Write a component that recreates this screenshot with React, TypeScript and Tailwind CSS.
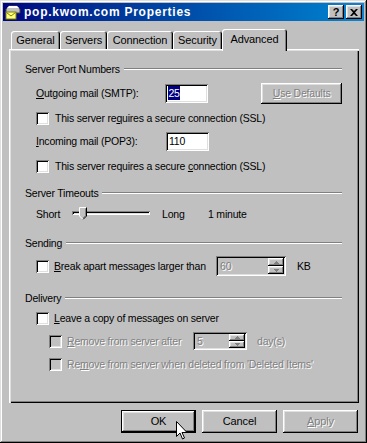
import React from 'react';

const RAISED = 'shadow-[inset_-1px_-1px_#000,inset_1px_1px_#fff,inset_-2px_-2px_#808080,inset_2px_2px_#dfdfdf]';
const SUNKEN = 'shadow-[inset_1px_1px_#808080,inset_-1px_-1px_#fff,inset_2px_2px_#000,inset_-2px_-2px_#dfdfdf]';
const DISABLED = 'text-[#808080] [text-shadow:1px_1px_0_#fff]';

const TABS = [
  { label: 'General', w: 'w-[49px]' },
  { label: 'Servers', w: 'w-[47px]' },
  { label: 'Connection', w: 'w-[66px]' },
  { label: 'Security', w: 'w-[49px]' },
];

const Check = ({ disabled }: { disabled?: boolean }) => (
  <span
    className={
      'block w-[13px] h-[13px] shrink-0 ' +
      SUNKEN +
      (disabled ? ' bg-[#c0c0c0]' : ' bg-white')
    }
  />
);

const GroupHeader = ({ title }: { title: string }) => (
  <div className="flex items-center h-[14px]">
    <span className="whitespace-nowrap">{title}</span>
    <div className="flex-1 ml-[4px] h-[2px] border-t border-t-[#808080] border-b border-b-white" />
  </div>
);

// disabled spinner field (number box + up/down buttons)
const Spinner = ({ value, box }: { value: string; box: string }) => (
  <div className={'flex items-stretch p-[2px] bg-[#c0c0c0] ' + SUNKEN + ' ' + box}>
    <span className={'flex-1 pl-[2px] flex items-center ' + DISABLED}>{value}</span>
    <div className="flex flex-col w-[16px]">
      <div className={'flex-1 flex items-center justify-center ' + RAISED}>
        <svg width="5" height="3" viewBox="0 0 5 3">
          <path d="M2 0h1v1h1v1h1v1H0V2h1V1h1z" fill="#808080" />
        </svg>
      </div>
      <div className={'flex-1 flex items-center justify-center ' + RAISED}>
        <svg width="5" height="3" viewBox="0 0 5 3">
          <path d="M0 0h5v1H4v1H3v1H2V2H1V1H0z" fill="#808080" />
        </svg>
      </div>
    </div>
  </div>
);

const TitleIcon = () => (
  <svg width="16" height="16" viewBox="0 0 16 16" className="shrink-0">
    <path d="M4 2h8l3 3v4H1V5z" fill="#c0c0c0" stroke="#404040" strokeWidth="1" />
    <path d="M4 2h8l2 2H2z" fill="#fff" />
    <rect x="1" y="8" width="10" height="7" fill="#ffff80" stroke="#808000" strokeWidth="1" />
    <path d="M1.5 8.5l4.5 3.5l4.5-3.5" fill="none" stroke="#808000" strokeWidth="1" />
  </svg>
);

const Cursor = () => (
  <svg width="12" height="19" viewBox="0 0 12 19" className="absolute left-[176px] top-[421px]">
    <path d="M0.5 0.5v15l3.5-3.5l2.5 6l2-1l-2.5-5.5h5z" fill="#fff" stroke="#000" strokeWidth="1" />
  </svg>
);

export default function App() {
  return (
    <div className="w-[367px] h-[443px] relative bg-[#c0c0c0] text-black text-[10.5px] tracking-[-0.2px] leading-[13px] font-['Liberation_Sans',Arial,sans-serif] p-[3px] flex flex-col shadow-[inset_-1px_-1px_#000,inset_1px_1px_#dfdfdf,inset_-2px_-2px_#808080,inset_2px_2px_#fff]">
      {/* ── Title bar ─────────────────────────────────────────── */}
      <div className="h-[18px] flex items-center pl-[2px] pr-[2px] bg-gradient-to-r from-[#000080] to-[#1084d0]">
        <TitleIcon />
        <span className="ml-[3px] text-white font-bold text-[12px] tracking-[0.75px]">pop.kwom.com Properties</span>
        <div className={'ml-auto w-[16px] h-[14px] bg-[#c0c0c0] flex items-center justify-center font-bold text-[11px] ' + RAISED}>
          ?
        </div>
        <div className={'ml-[2px] w-[16px] h-[14px] bg-[#c0c0c0] flex items-center justify-center ' + RAISED}>
          <svg width="8" height="7" viewBox="0 0 8 7">
            <path d="M0 0h2l2 2l2-2h2L5 3.5L8 7H6L4 5L2 7H0l3-3.5z" fill="#000" />
          </svg>
        </div>
      </div>

      {/* ── Tabs ──────────────────────────────────────────────── */}
      <div className="flex items-end h-[28px] pl-[8px] text-[11px] tracking-[-0.1px]">
        {TABS.map((t) => (
          <div
            key={t.label}
            className={
              t.w +
              ' h-[18px] flex items-center justify-center pt-[1px] rounded-t-[3px] shadow-[inset_1px_1px_#fff,inset_-1px_0_#000,inset_-2px_0_#808080]'
            }
          >
            {t.label}
          </div>
        ))}
        <div className="relative z-10 w-[65px] h-[22px] -mb-[2px] bg-[#c0c0c0] flex justify-center pt-[4px] rounded-t-[3px] shadow-[inset_1px_1px_#fff,inset_-1px_0_#000,inset_-2px_0_#808080]">
          Advanced
        </div>
      </div>

      {/* ── Panel ─────────────────────────────────────────────── */}
      <div className="ml-[6px] w-[350px] h-[354px] pl-[16px] pr-[17px] pt-[13px] flex flex-col shadow-[inset_1px_1px_#fff,inset_2px_2px_#dfdfdf,inset_-1px_-1px_#000,inset_-2px_-2px_#808080]">
        <GroupHeader title="Server Port Numbers" />

        <div className="mt-[6px] h-[22px] flex items-center pl-[11px]">
          <span className="w-[130px]">
            <u>O</u>utgoing mail (SMTP):
          </span>
          <div className={'w-[43px] h-[19px] bg-white flex items-center pl-[3px] ' + SUNKEN}>
            <span className="bg-[#000080] text-white leading-[14px]">25</span>
          </div>
          <div className={'ml-[53px] w-[81px] h-[21px] flex items-center justify-center ' + RAISED + ' ' + DISABLED}>
            <span>
              <u>U</u>se Defaults
            </span>
          </div>
        </div>

        <div className="mt-[4px] h-[20px] flex items-center gap-[6px] pl-[11px]">
          <Check />
          <span>
            This server re<u>q</u>uires a secure connection (SSL)
          </span>
        </div>

        <div className="mt-[2px] h-[22px] flex items-center pl-[11px]">
          <span className="w-[130px]">
            <u>I</u>ncoming mail (POP3):
          </span>
          <div className={'w-[43px] h-[19px] bg-white flex items-center pl-[3px] ' + SUNKEN}>110</div>
        </div>

        <div className="mt-[4px] h-[20px] flex items-center gap-[6px] pl-[11px]">
          <Check />
          <span>
            This server requires a secure <u>c</u>onnection (SSL)
          </span>
        </div>

        <div className="mt-[10px]">
          <GroupHeader title="Server Timeouts" />
        </div>

        <div className="mt-[3px] h-[20px] flex items-center pl-[11px]">
          <span className="w-[36px] pt-[3px]">Short</span>
          <div className="relative w-[78px] h-[4px] bg-[#c0c0c0] -mt-[1px] shadow-[inset_1px_1px_#808080,inset_-1px_-1px_#fff,inset_2px_2px_#000,inset_-2px_-2px_#dfdfdf]">
            <svg width="8" height="13" viewBox="0 0 8 13" className="absolute left-[7px] -top-[4px]">
              <path d="M0 0h8v9l-4 4l-4-4z" fill="#c0c0c0" />
              <path d="M0.5 9V0.5h7" fill="none" stroke="#fff" strokeWidth="1" />
              <path d="M7.5 0.5V9l-3.5 3.5" fill="none" stroke="#000" strokeWidth="1" />
              <path d="M6.5 1.5V8.5l-2.5 2.5" fill="none" stroke="#808080" strokeWidth="1" />
              <path d="M0.5 9l3.5 3.5" fill="none" stroke="#fff" strokeWidth="1" />
            </svg>
          </div>
          <span className="ml-[12px] w-[46px] pt-[3px]">Long</span>
          <span className="pt-[3px]">1 minute</span>
        </div>

        <div className="mt-[13px]">
          <GroupHeader title="Sending" />
        </div>

        <div className="mt-[5px] h-[22px] flex items-center pl-[11px]">
          <Check />
          <span className="ml-[5px] w-[162px] whitespace-nowrap">
            <u>B</u>reak apart messages larger than
          </span>
          <Spinner value="60" box="w-[70px] h-[20px]" />
          <span className="ml-[11px]">KB</span>
        </div>

        <div className="mt-[14px]">
          <GroupHeader title="Delivery" />
        </div>

        <div className="mt-[3px] h-[20px] flex items-center pl-[11px]">
          <Check />
          <span className="ml-[5px]">
            <u>L</u>eave a copy of messages on server
          </span>
        </div>

        <div className="mt-[3px] h-[20px] flex items-center pl-[24px]">
          <Check disabled />
          <span className={'ml-[5px] w-[126px] whitespace-nowrap ' + DISABLED}>
            <u>R</u>emove from server after
          </span>
          <Spinner value="5" box="w-[54px] h-[18px]" />
          <span className={'ml-[10px] ' + DISABLED}>day(s)</span>
        </div>

        <div className="mt-[3px] h-[20px] flex items-center pl-[24px]">
          <Check disabled />
          <span className={'ml-[5px] whitespace-nowrap ' + DISABLED}>
            Re<u>m</u>ove from server when deleted from 'Deleted Items'
          </span>
        </div>
      </div>

      {/* ── Buttons ───────────────────────────────────────────── */}
      <div className="mt-[7px] flex justify-end gap-[6px] pr-[6px] text-[11px] tracking-[-0.1px]">
        <div className="w-[75px] h-[23px] border border-black">
          <div className={'w-full h-full flex items-center justify-center ' + RAISED}>OK</div>
        </div>
        <div className={'w-[75px] h-[23px] flex items-center justify-center ' + RAISED}>Cancel</div>
        <div className={'w-[75px] h-[23px] flex items-center justify-center ' + RAISED + ' ' + DISABLED}>
          <span>
            <u>A</u>pply
          </span>
        </div>
      </div>

      <Cursor />
    </div>
  );
}
